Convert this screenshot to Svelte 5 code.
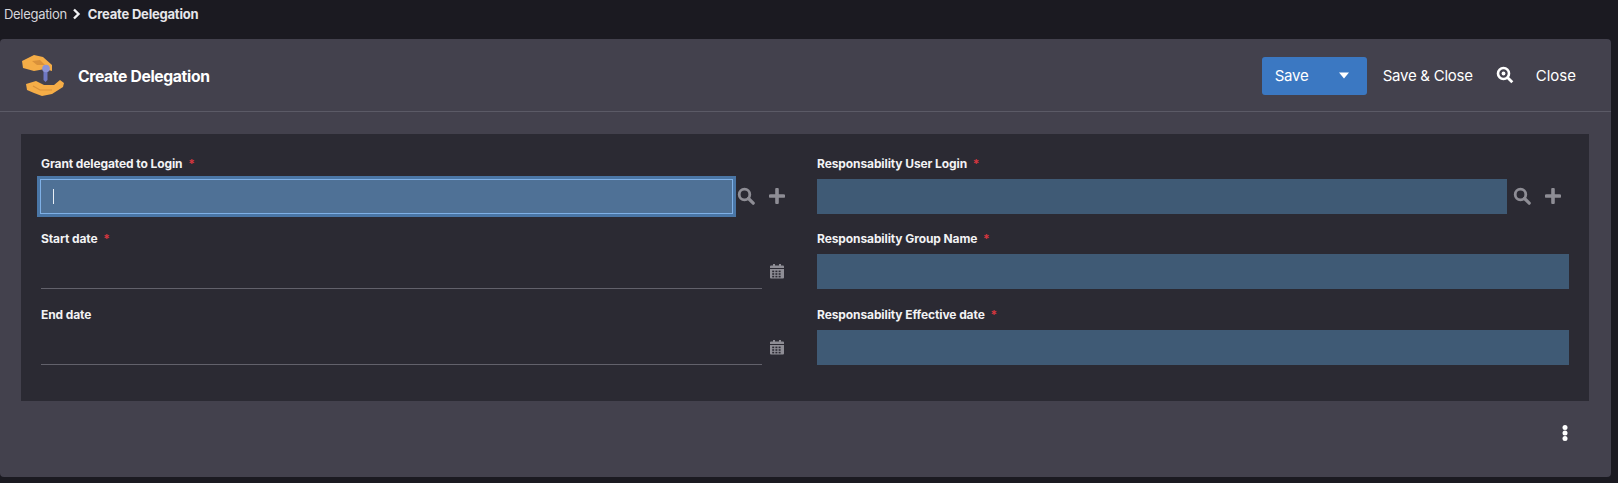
<script>
  const calendarPath = 'M1 6h14v8.500a1 1 0 0 1-1 1H2a1 1 0 0 1-1-1zM2 2.500h2V1h2v1.500h4V1h2v1.500h2a1 1 0 0 1 1 1V5H1V3.500a1 1 0 0 1 1-1z';
  const cells = [
    [3.2, 7.6], [6.4, 7.6], [9.6, 7.6],
    [3.2, 10.2], [6.4, 10.2], [9.6, 10.2],
    [3.2, 12.8], [6.4, 12.8], [9.6, 12.8]
  ];
</script>

{#snippet searchIcon()}
  <svg class="icon" width="18" height="18" viewBox="0 0 18 18" fill="none">
    <circle cx="7.500" cy="7.500" r="5.300" stroke="currentColor" stroke-width="2.800" />
    <path d="M11.500 11.500L16.200 16.200" stroke="currentColor" stroke-width="3.200" stroke-linecap="round" />
  </svg>
{/snippet}

{#snippet plusIcon()}
  <svg class="icon" width="16" height="16" viewBox="0 0 16 16" fill="none">
    <path d="M8 1.500V14.500M1.500 8H14.500" stroke="currentColor" stroke-width="3.600" stroke-linecap="round" />
  </svg>
{/snippet}

{#snippet calendarIcon()}
  <svg class="icon" width="16" height="17" viewBox="0 0 16 17">
    <path d={calendarPath} fill="currentColor" />
    {#each cells as [x, y]}
      <rect {x} {y} width="2" height="1.600" fill="#2b2a33" />
    {/each}
  </svg>
{/snippet}

<div class="page">
  <nav class="crumbs">
    <span>Delegation</span>
    <svg width="9" height="12" viewBox="0 0 9 12" fill="none">
      <path d="M2 1.500L6.500 6L2 10.500" stroke="#f2f2f4" stroke-width="2.400" />
    </svg>
    <strong>Create Delegation</strong>
  </nav>

  <section class="panel">
    <header class="head">
      <div class="title">
        <svg class="logo" width="44" height="44" viewBox="0 0 44 44">
          <path d="M2 8L14 2L23 4L32 12L32 18L25 16L14 18L3 15Z" fill="#f5ad47" />
          <path d="M12 8L20 7L25 12L17 12Z" fill="#d9913a" />
          <path d="M23.500 17H27.500V27L25.500 29L23.500 27Z" fill="#6f78c4" />
          <circle cx="26" cy="15.500" r="3.800" fill="#8b93d6" />
          <path d="M6 31L16 28L24 32L34 32L40 27L44 30L43 34L32 41L22 43L14 40L7 37Z" fill="#f5ad47" />
          <path d="M13 33L20 37H32" fill="none" stroke="#d9913a" stroke-width="1.200" />
        </svg>
        <h1>Create Delegation</h1>
      </div>
      <div class="actions">
        <button class="save">
          <span>Save</span>
          <svg width="12" height="7" viewBox="0 0 12 7"><path d="M1 0.500H11L6 6.500Z" fill="#fff" /></svg>
        </button>
        <button class="plain">Save &amp; Close</button>
        <svg class="zoom" width="18" height="18" viewBox="0 0 18 18" fill="none">
          <circle cx="7.500" cy="7.500" r="5.500" stroke="#fff" stroke-width="2.600" />
          <circle cx="7.500" cy="7.500" r="1.900" fill="#fff" />
          <path d="M11.500 11.500L16.300 16.300" stroke="#fff" stroke-width="2.800" />
        </svg>
        <button class="plain close">Close</button>
      </div>
    </header>

    <div class="body">
      <form class="form">
        <div class="field">
          <span class="label">Grant delegated to Login <i>*</i></span>
          <div class="row">
            <div class="input focused"><span class="caret"></span></div>
            <div class="tools short">{@render searchIcon()}{@render plusIcon()}</div>
          </div>
        </div>
        <div class="field">
          <span class="label">Responsability User Login <i>*</i></span>
          <div class="row">
            <div class="input"></div>
            <div class="tools">{@render searchIcon()}{@render plusIcon()}</div>
          </div>
        </div>
        <div class="field">
          <span class="label">Start date <i>*</i></span>
          <div class="row">
            <div class="date"></div>
            <div class="cal">{@render calendarIcon()}</div>
          </div>
        </div>
        <div class="field">
          <span class="label">Responsability Group Name <i>*</i></span>
          <div class="row"><div class="input"></div></div>
        </div>
        <div class="field">
          <span class="label">End date</span>
          <div class="row">
            <div class="date"></div>
            <div class="cal">{@render calendarIcon()}</div>
          </div>
        </div>
        <div class="field">
          <span class="label">Responsability Effective date <i>*</i></span>
          <div class="row"><div class="input"></div></div>
        </div>
      </form>

      <div class="foot">
        <svg width="6" height="18" viewBox="0 0 6 18">
          <circle cx="3" cy="3.500" r="2.500" fill="#fff" />
          <circle cx="3" cy="9" r="2.500" fill="#fff" />
          <circle cx="3" cy="14.500" r="2.500" fill="#fff" />
        </svg>
      </div>
    </div>
  </section>
</div>

<style>
  :global(body) {
    margin: 0;
    background: #1b1a21;
    font-family: Inter, "Liberation Sans", sans-serif;
  }

  .page {
    width: 1618px;
    height: 483px;
    overflow: hidden;
    display: flex;
    flex-direction: column;
    color: #fff;
  }

  .crumbs {
    height: 39px;
    box-sizing: border-box;
    padding: 0 0 11px 4px;
    display: flex;
    align-items: center;
    gap: 5px;
    font-size: 13px;
    letter-spacing: -0.3px;
    color: #d6d6dc;
  }

  .crumbs strong {
    font-weight: 700;
    color: #e6e6ea;
    margin-left: 2px;
    letter-spacing: -0.2px;
  }

  .panel {
    width: 1611px;
    height: 438px;
    background: #43414d;
    border-radius: 4px;
    display: flex;
    flex-direction: column;
  }

  .head {
    height: 73px;
    flex: none;
    box-sizing: border-box;
    border-bottom: 1px solid #5b5a66;
    display: flex;
    align-items: center;
    justify-content: space-between;
    padding: 0 35px 0 20px;
  }

  .title {
    display: flex;
    align-items: center;
    gap: 14px;
  }

  .title h1 {
    margin: 3px 0 0;
    font-size: 15.700px;
    font-weight: 700;
    letter-spacing: -0.35px;
  }

  .actions {
    display: flex;
    align-items: center;
    padding-top: 2px;
  }

  button {
    font: inherit;
    font-size: 15px;
    letter-spacing: -0.25px;
    color: #fff;
    background: none;
    border: none;
    padding: 0 0 2px;
  }

  .close {
    letter-spacing: 0;
  }

  .save {
    width: 105px;
    height: 38px;
    background: #3b78c2;
    border-radius: 3px;
    display: flex;
    align-items: center;
    justify-content: space-between;
    padding: 0 17px 2px 13px;
    margin-right: 16px;
  }

  .zoom {
    margin: 0 22px 2px 23px;
  }

  .form {
    margin: 22px 22px 0 21px;
    height: 267px;
    box-sizing: border-box;
    background: #2b2a33;
    padding: 23px 20px 0 20px;
    display: grid;
    grid-template-columns: 744px 752px;
    grid-template-rows: 75px 76px 75px;
    column-gap: 32px;
  }

  .field {
    display: flex;
    flex-direction: column;
    gap: 8px;
  }

  .label {
    font-size: 12px;
    line-height: 14px;
    font-weight: 700;
    letter-spacing: -0.1px;
    color: #f2f2f4;
  }

  .label i {
    color: #d6363f;
    font-style: normal;
    margin-left: 3px;
  }

  .row {
    display: flex;
    align-items: center;
    height: 35px;
  }

  .input {
    flex: 1;
    height: 35px;
    background: #3f5a75;
    position: relative;
  }

  .input.focused {
    background: #4f7196;
    box-sizing: border-box;
    border: 1px solid #7fb0e6;
    box-shadow: 0 0 0 3px #4a76a6;
    margin-left: -1px;
    display: flex;
    align-items: center;
    padding-left: 12px;
  }

  .caret {
    width: 1px;
    height: 15px;
    background: #e8eef5;
  }

  .tools {
    width: 62px;
    flex: none;
    display: flex;
    align-items: center;
    gap: 14px;
    padding: 0 0 2px 6px;
    box-sizing: border-box;
    color: #8e8d95;
  }

  .tools.short {
    width: 52px;
    padding-left: 4px;
  }

  .date {
    flex: 1;
    height: 35px;
    box-sizing: border-box;
    border-bottom: 1px solid #62616b;
  }

  .cal {
    width: 23px;
    flex: none;
    display: flex;
    justify-content: flex-end;
    color: #8e8d95;
  }

  .icon {
    display: block;
  }

  .foot {
    display: flex;
    justify-content: flex-end;
    padding: 23px 43px 0 0;
  }
</style>
